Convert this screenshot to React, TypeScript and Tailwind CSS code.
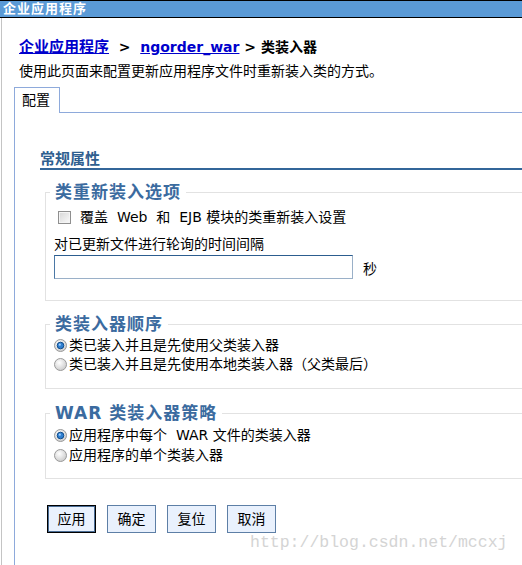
import React from 'react'

const sans = "font-['DejaVu_Sans','Noto_Sans_CJK_SC',sans-serif]"

function Radio({ checked }: { checked?: boolean }) {
  return (
    <svg width="13" height="13" viewBox="0 0 13 13" className="shrink-0">
      <defs>
        <radialGradient id={checked ? 'rg-on' : 'rg-off'} cx="0.4" cy="0.35" r="0.7">
          <stop offset="0" stopColor="#ffffff" />
          <stop offset="1" stopColor="#c9c9c9" />
        </radialGradient>
      </defs>
      <circle cx="6.5" cy="6.5" r="6" fill={`url(#${checked ? 'rg-on' : 'rg-off'})`} stroke="#9a9a9a" />
      {checked && (
        <>
          <circle cx="6.5" cy="6.5" r="3.3" fill="#2f7fd0" stroke="#0f4c8c" strokeWidth="1" />
          <circle cx="5.8" cy="5.7" r="1.1" fill="#9fd0ff" />
        </>
      )}
    </svg>
  )
}

function Group({ legend, children, className = '' }: { legend: React.ReactNode; children: React.ReactNode; className?: string }) {
  return (
    <fieldset className={`ml-[30px] w-[500px] border border-[#e2e2e2] pl-[4px] ${className}`}>
      <legend className="px-[5px] text-[17px] leading-[18px] font-bold tracking-[1px] text-[#3b6b9f]">{legend}</legend>
      {children}
    </fieldset>
  )
}

function Btn({ label, focus }: { label: string; focus?: boolean }) {
  return (
    <button
      className={`w-[49px] h-[28px] bg-[#e9f1fd] text-[14px] text-black ${
        focus ? 'border border-black shadow-[inset_0_0_0_1px_#4a6d96]' : 'border border-[#5d7fa6]'
      }`}
    >
      {label}
    </button>
  )
}

export default function App() {
  return (
    <div className={`relative w-[522px] h-[565px] overflow-hidden bg-white text-black ${sans}`}>
      {/* title bar */}
      <div className="h-[18px] bg-[#5a9ad6] border-y border-black pl-[3px] text-[13px] leading-[16px] font-bold tracking-[1px] text-white">
        企业应用程序
      </div>

      <div className="ml-[1px] border-l border-[#c4c4c4] h-[547px]">
        {/* breadcrumb */}
        <div className="pl-[17px] pt-[19px] leading-[20px] font-bold whitespace-nowrap">
          <a className="text-[15px] text-[#0000cc] underline">企业应用程序</a>
          <span className="text-[14px]">&nbsp;&nbsp;&gt;&nbsp;&nbsp;</span>
          <a className="text-[14px] text-[#0000cc] underline">ngorder_war</a>
          <span className="text-[14px]">&nbsp;&gt;&nbsp;类装入器</span>
        </div>
        <div className="pl-[17px] mt-[5px] text-[14px] leading-[18px]">使用此页面来配置更新应用程序文件时重新装入类的方式。</div>

        {/* tabs */}
        <div className="flex mt-[7px] ml-[12px]">
          <div className="w-[46px] h-[26px] border-x border-t border-[#8eaadb] pl-[7px] pt-[3px] text-[14px] leading-[18px]">配置</div>
          <div className="flex-1 border-b border-[#8eaadb]" />
        </div>

        {/* panel */}
        <div className="ml-[12px] border-l border-[#8eaadb] h-[460px] pt-[37px]">
          <div className="ml-[25px] border-b-2 border-[#336699] text-[15px] leading-[18px] font-bold text-[#2f5f8f]">常规属性</div>

          <Group legend="类重新装入选项" className="mt-[13px] pb-[20px]">
            <div className="pl-[4px] pt-[6px] h-[26px] flex items-center text-[14px]">
              <span className="ml-[4px] w-[13px] h-[13px] border border-[#8f8f8f] bg-gradient-to-br from-[#d6d6d6] to-[#fafafa] shadow-[inset_0_0_0_1px_#f4f4f4]" />
              <span className="ml-[9px]">覆盖&nbsp; Web&nbsp; 和&nbsp; EJB 模块的类重新装入设置</span>
            </div>
            <div className="pl-[4px] mt-[7px] text-[14px] leading-[20px]">对已更新文件进行轮询的时间间隔</div>
            <div className="pl-[4px] flex items-center">
              <input className="w-[299px] h-[24px] border border-[#9ab0c8] border-t-[#2c5d8f] border-l-[#4b78a6] outline-none" />
              <span className="ml-[10px] pt-[5px] text-[14px]">秒</span>
            </div>
          </Group>

          <Group legend="类装入器顺序" className="mt-[14px] pt-[3px] pb-[14px]">
            <div className="pl-[4px] h-[19px] flex items-center gap-[2px] text-[14px]">
              <Radio checked />
              <span>类已装入并且是先使用父类装入器</span>
            </div>
            <div className="pl-[4px] h-[19px] flex items-center gap-[2px] text-[14px]">
              <Radio />
              <span>类已装入并且是先使用本地类装入器（父类最后）</span>
            </div>
          </Group>

          <Group legend="WAR 类装入器策略" className="mt-[15px] pt-[3px] pb-[13px]">
            <div className="pl-[4px] h-[20px] flex items-center gap-[2px] text-[14px]">
              <Radio checked />
              <span>应用程序中每个&nbsp; WAR 文件的类装入器</span>
            </div>
            <div className="pl-[4px] h-[20px] flex items-center gap-[2px] text-[14px]">
              <Radio />
              <span>应用程序的单个类装入器</span>
            </div>
          </Group>

          <div className="ml-[32px] mt-[26px] flex gap-[11px]">
            <Btn label="应用" focus />
            <Btn label="确定" />
            <Btn label="复位" />
            <Btn label="取消" />
          </div>
        </div>
      </div>

      {/* watermark */}
      <div className="absolute left-[250px] top-[533px] font-['Liberation_Mono',monospace] text-[16.5px] leading-[20px] text-[#d4d4d4]">
        http://blog.csdn.net/mccxj
      </div>
    </div>
  )
}
